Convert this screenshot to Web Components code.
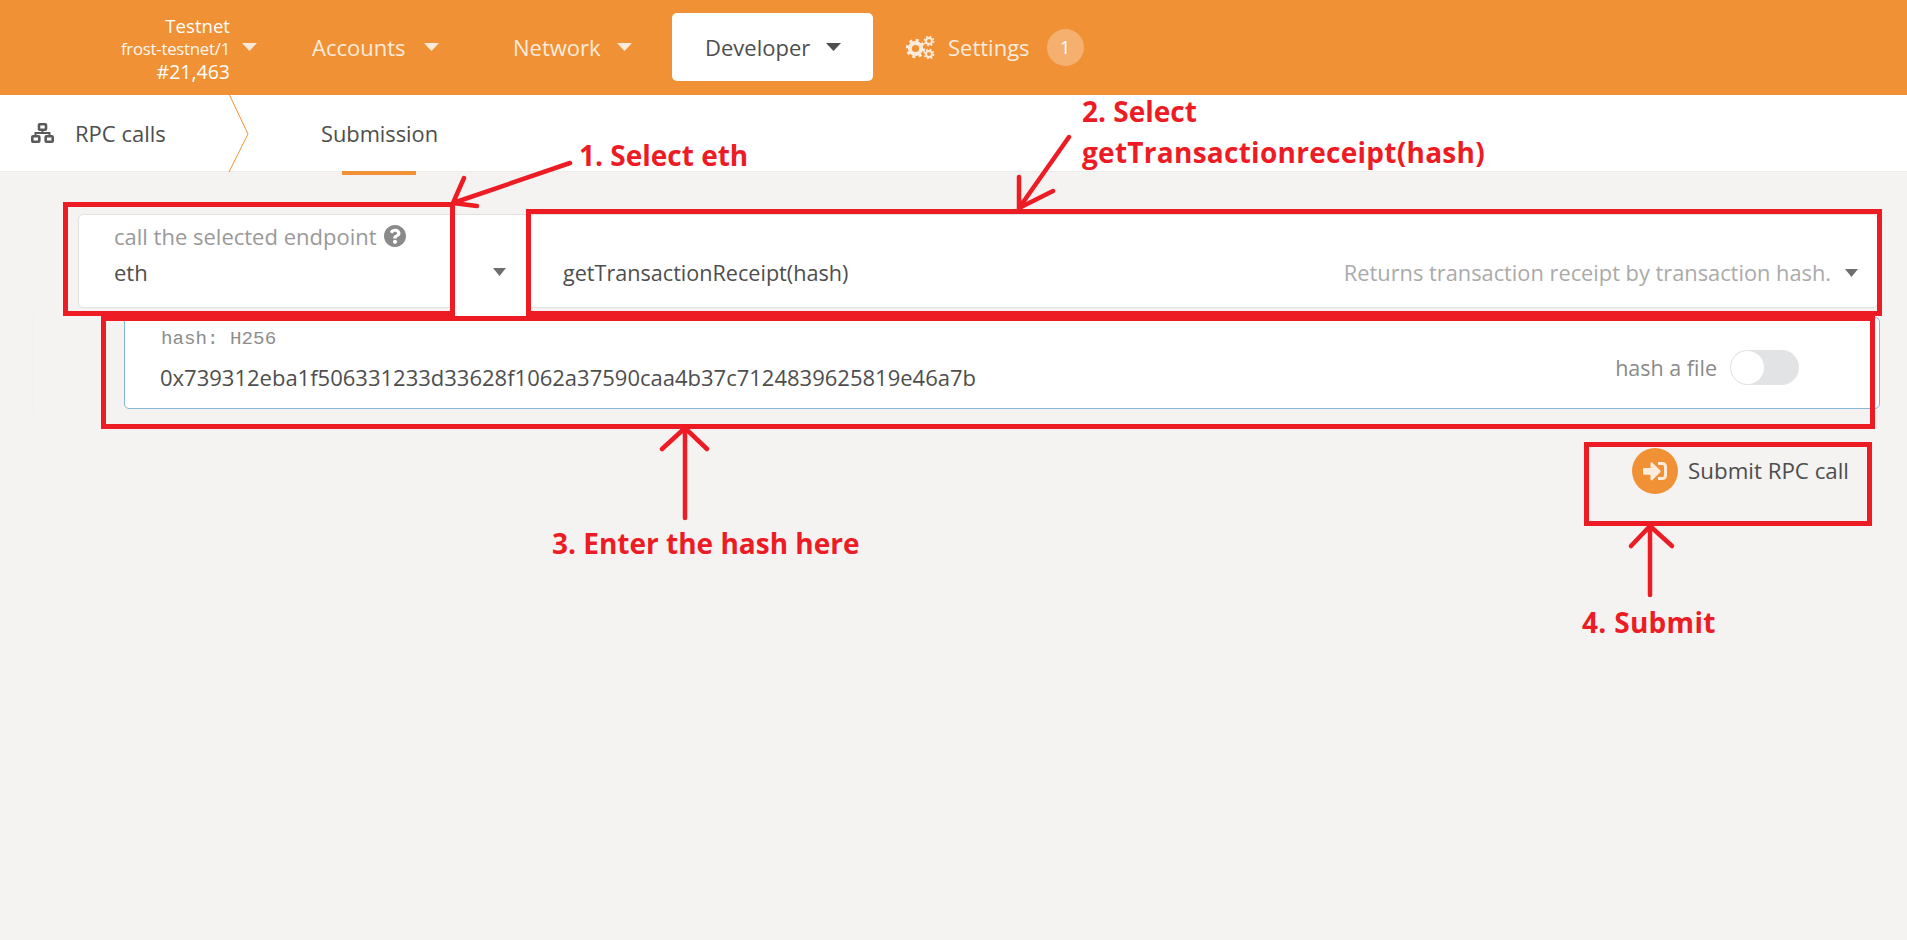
<!DOCTYPE html>
<html><head><meta charset="utf-8"><title>RPC calls</title>
<style>
html,body{margin:0;padding:0;height:100%}
body{background:#f4f3f1;font-family:"Open Sans","Noto Sans",sans-serif;color:#4e4e4e;position:relative;min-height:940px;overflow:hidden}
</style></head><body>
<app-header>
  <net-info></net-info>
  <menu-item label="Accounts" style="width:201px"></menu-item>
  <menu-item label="Network" gap="16" style="width:159px"></menu-item>
  <menu-item label="Developer" gap="16" active style="width:201px"></menu-item>
  <settings-item></settings-item>
</app-header>
<sub-tabs></sub-tabs>
<rpc-form></rpc-form>
<annotation-layer></annotation-layer>
<script>
const def=(name,html)=>customElements.define(name,class extends HTMLElement{
  constructor(){super();this.attachShadow({mode:'open'}).innerHTML=typeof html==='function'?html(this):html;}
  connectedCallback(){ if(typeof html==='function') this.shadowRoot.innerHTML=html(this); }
});
const caret=(c,w=15,h=8)=>`<svg width="${w}" height="${h}" viewBox="0 0 15 8" preserveAspectRatio="none" style="display:block;flex:none"><path d="M0 0H15L7.5 8Z" fill="${c}"/></svg>`;

def('app-header',`<style>:host{display:flex;align-items:center;height:95px;background:#f19135;color:#fff;font-size:22px}</style><slot></slot>`);

def('net-info',`<style>
:host{display:flex;align-items:center;width:312px;box-sizing:border-box;padding-left:120px;flex:none;margin-top:2px}
.t{width:110px;text-align:right;line-height:23px;color:#fff}
.c{margin-left:12px;margin-top:-3px}
.l{font-size:18.6px;white-space:nowrap}
.n{font-size:19.5px;white-space:nowrap}
.s{font-size:16.8px;letter-spacing:-.25px;opacity:.92;white-space:nowrap;margin-left:-2px}
</style><div class="t"><div class="l">Testnet</div><div class="s">frost-testnet/1</div><div class="n">#21,463</div></div><div class="c">${caret('#fde9d7')}</div>`);

def('menu-item',h=>`<style>
:host{display:block;flex:none;margin-top:-1px}
.b{display:flex;align-items:center;height:68px;border-radius:5px;gap:${h.getAttribute('gap')||18}px;padding-left:${h.hasAttribute('active')?33:0}px;box-sizing:border-box;font-size:22px;
 ${h.hasAttribute('active')?'background:#fff;color:#4e4e4e;':'color:#fdebdc;'}}
</style><div class="b"><span>${h.getAttribute('label')||''}</span>${caret(h.hasAttribute('active')?'#4e4e4e':'#fdebdc')}</div>`);

def('settings-item',`<style>
:host{display:flex;align-items:center;margin-left:33px;color:#fdebdc;font-size:22px;margin-top:-1px}
svg{display:block}
span.t{margin-left:13px}
.b{margin-left:17px;width:37px;height:37px;border-radius:50%;background:#f5b06f;color:#fff;display:flex;align-items:center;justify-content:center;font-size:18px}
</style>
<svg width="29" height="23" viewBox="0 0 29 23" fill="none" stroke="#fdebdc">
 <circle cx="9.5" cy="12.5" r="5.6" stroke-width="4"/>
 <circle cx="9.5" cy="12.5" r="8.2" stroke-width="3" stroke-dasharray="3 3.44"/>
 <circle cx="23" cy="5" r="3" stroke-width="2"/>
 <circle cx="23" cy="5" r="4.6" stroke-width="1.6" stroke-dasharray="1.8 1.81"/>
 <circle cx="23" cy="18" r="3" stroke-width="2"/>
 <circle cx="23" cy="18" r="4.6" stroke-width="1.6" stroke-dasharray="1.8 1.81"/>
</svg><span class="t">Settings</span><div class="b">1</div>`);

def('sub-tabs',`<style>
:host{display:flex;height:77px;background:#fff;box-sizing:border-box;position:relative;font-size:22px;border-bottom:1px solid #eeecea}
.first{display:flex;align-items:center;padding-left:31px;width:229px;box-sizing:border-box;gap:21px}
.chev{position:absolute;left:228px;top:0}
.tab{margin-left:92px;display:flex;align-items:center;position:relative;height:77px;font-size:21.8px}
.tab::after{content:"";position:absolute;left:21px;width:74px;bottom:-3px;height:4px;background:#f19135}
</style>
<div class="first"><svg width="23" height="20" viewBox="0 0 23 20" fill="none" stroke="#5a5a5a" stroke-width="2.6"><rect x="8" y="1.3" width="7" height="5.4" rx=".8"/><rect x="1.3" y="13.3" width="7" height="5.4" rx=".8"/><rect x="14.7" y="13.3" width="7" height="5.4" rx=".8"/><path d="M11.5 6.6V10M4.5 13V10H18.5V13" stroke-width="2"/></svg><span>RPC calls</span></div>
<svg class="chev" width="22" height="77" viewBox="0 0 22 77" fill="none" stroke="#f19135"><path d="M1.5 0L20 39L1 77"/></svg>
<div class="tab">Submission</div>`);

def('rpc-form',`<style>
:host{display:block;padding:42px 27px 0 78px;font-size:22px}
.row1{display:flex;height:94px;background:#fff;border:1px solid #e2e1e0;border-radius:5px;box-sizing:border-box;width:1800px}
.ep{width:447px;flex:none;box-sizing:border-box;padding:6px 20px 0 35px;position:relative}
.lab{color:#999;display:flex;align-items:center;gap:7px;height:30px}
.val{margin-top:6px;line-height:30px}
.car{position:absolute;right:20px;top:53px}
.m{flex:1;display:flex;align-items:center;padding:23px 19px 0 37px;box-sizing:border-box;height:92px}
.m .val{margin:0;flex:1;font-size:21.6px}
.d{color:#aaa;margin-right:14px;font-size:21.8px}
.row2{margin:9px 0 0 46px;height:92px;width:1756px;box-sizing:border-box;background:#fff;border:1px solid #85b7d9;border-radius:5px;display:flex;align-items:flex-start;padding:10px 0 0 35px;position:relative}
.row2::before{content:"";position:absolute;left:-93px;top:-4px;bottom:-6px;width:3px;background:#f2f1ef}
.left{flex:1}
.mono{font-family:"Liberation Mono","DejaVu Sans Mono",monospace;font-size:19.2px;color:#8d8d8d;line-height:22px;padding-left:1px}
.hash{margin-top:12px;line-height:30px;white-space:nowrap}
.tog{display:flex;align-items:center;gap:13px;color:#8a8a8a;margin:22px 80px 0 0;font-size:21.5px}
.sw{width:69px;height:35px;border-radius:18px;background:#e2e3e5;position:relative}
.sw::after{content:"";position:absolute;left:1px;top:1px;width:33px;height:33px;border-radius:50%;background:#fff}
.act{display:flex;justify-content:flex-end;align-items:center;gap:10px;margin-top:38px;padding-right:31px;height:47px;font-size:22.3px}
.circ{width:46px;height:46px;border-radius:50%;background:#f19135;display:flex;align-items:center;justify-content:center}
</style>
<div class="row1">
 <div class="ep"><div class="lab"><span>call the selected endpoint</span><svg width="22" height="22" viewBox="8 8 496 496"><path fill="#8a8a8a" d="M504 256c0 136.997-111.043 248-248 248S8 392.997 8 256C8 119.083 119.043 8 256 8s248 111.083 248 248zM262.655 90c-54.497 0-89.255 22.957-116.549 63.758-3.536 5.286-2.353 12.415 2.715 16.258l34.699 26.31c5.205 3.947 12.621 3.008 16.665-2.122 17.864-22.658 30.113-35.797 57.303-35.797 20.429 0 45.698 13.148 45.698 32.958 0 14.976-12.363 22.667-32.534 33.976C247.128 238.528 216 254.941 216 296v4c0 6.627 5.373 12 12 12h56c6.627 0 12-5.373 12-12v-1.333c0-28.462 83.186-29.647 83.186-106.667 0-58.002-60.165-102-116.531-102zM256 338c-25.365 0-46 20.635-46 46 0 25.364 20.635 46 46 46s46-20.636 46-46c0-25.365-20.635-46-46-46z"/></svg></div><div class="val">eth</div><div class="car">${caret('#6e6e6e',13,8)}</div></div>
 <div class="m"><div class="val">getTransactionReceipt(hash)</div><div class="d">Returns transaction receipt by transaction hash.</div>${caret('#6e6e6e',13,8)}</div>
</div>
<div class="row2"><div class="left"><div class="mono">hash: H256</div><div class="hash">0x739312eba1f506331233d33628f1062a37590caa4b37c7124839625819e46a7b</div></div><div class="tog"><span>hash a file</span><div class="sw"></div></div></div>
<div class="act"><div class="circ"><svg width="24" height="24" viewBox="0 0 512 512"><path fill="#fdebdc" d="M416 448h-84c-6.6 0-12-5.4-12-12v-40c0-6.6 5.4-12 12-12h84c17.7 0 32-14.3 32-32V160c0-17.7-14.3-32-32-32h-84c-6.6 0-12-5.4-12-12V76c0-6.6 5.4-12 12-12h84c53 0 96 43 96 96v192c0 53-43 96-96 96zm-47-201L201 79c-15-15-41-4.5-41 17v96H24c-13.3 0-24 10.7-24 24v96c0 13.3 10.7 24 24 24h136v96c0 21.5 26 32 41 17l168-168c9.3-9.4 9.3-24.6 0-34z"/></svg></div><span>Submit RPC call</span></div>`);

def('annotation-layer',`<style>
:host{position:absolute;left:0;top:0;width:1907px;height:940px;pointer-events:none;display:block}
svg{position:absolute;left:0;top:0}
.n{position:absolute;color:#ed1c24;font:700 28px/40px "Open Sans","Noto Sans",sans-serif;white-space:nowrap}
</style>
<svg width="1907" height="940" fill="none" stroke="#ed1c24" stroke-width="5">
 <rect x="455" y="306" width="71" height="11" fill="#fff" stroke="none"/>
 <rect x="65.5" y="204.5" width="387" height="109"/>
 <rect x="528.5" y="211.5" width="1351" height="102"/>
 <rect x="103.5" y="318.5" width="1769" height="108"/>
 <rect x="1586.5" y="444.5" width="283" height="79"/>
 <g stroke-width="4.5" stroke-linecap="round" stroke-linejoin="round">
  <path d="M570 163L453 203M464 178L453 203L477 206"/>
  <path d="M1069 137L1019 208M1019 177V208L1053 191"/>
  <path d="M685 518V428M662 449L685 428L707 449"/>
  <path d="M1650 595V526M1631 546L1650 526L1672 546"/>
 </g>
</svg>
<div class="n" style="left:579px;top:135px">1. Select eth</div>
<div class="n" style="left:1082px;top:91px">2. Select</div>
<div class="n" style="left:1082px;top:132px;letter-spacing:.27px">getTransactionreceipt(hash)</div>
<div class="n" style="left:552px;top:523px">3. Enter the hash here</div>
<div class="n" style="left:1582px;top:602px;letter-spacing:.3px">4. Submit</div>`);
</script>
</body></html>
